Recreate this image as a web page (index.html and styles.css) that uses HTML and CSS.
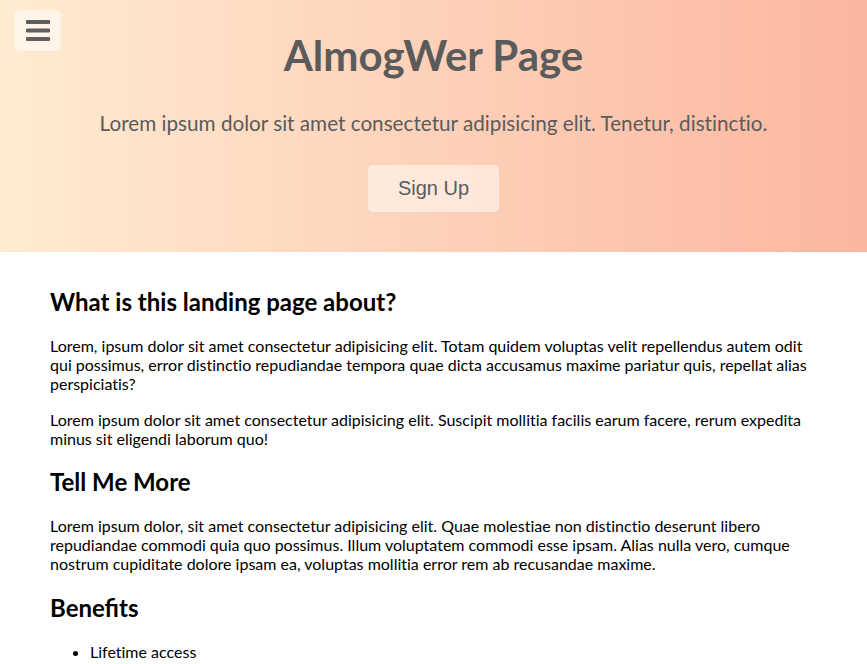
FILE: index.html
```html
<!DOCTYPE html>
<html lang="en">
<head>
<meta charset="utf-8">
<title>AlmogWer Page</title>
<link rel="stylesheet" href="styles.css">
</head>
<body>
<header class="hero">
  <button class="menu-btn" aria-label="Menu">
    <svg width="24" height="21" viewBox="0 0 24 21"><rect x="0" y="0" width="24" height="4" rx="1"/><rect x="0" y="8.5" width="24" height="4" rx="1"/><rect x="0" y="17" width="24" height="4" rx="1"/></svg>
  </button>
  <h1 class="hero-title">AlmogWer Page</h1>
  <p class="hero-sub">Lorem ipsum dolor sit amet consectetur adipisicing elit. Tenetur, distinctio.</p>
  <button class="signup">Sign Up</button>
</header>
<main class="content">
  <h2>What is this landing page about?</h2>
  <p>Lorem, ipsum dolor sit amet consectetur adipisicing elit. Totam quidem voluptas velit repellendus autem odit qui possimus, error distinctio repudiandae tempora quae dicta accusamus maxime pariatur quis, repellat alias perspiciatis?</p>
  <p>Lorem ipsum dolor sit amet consectetur adipisicing elit. Suscipit mollitia facilis earum facere, rerum expedita minus sit eligendi laborum quo!</p>
  <h2>Tell Me More</h2>
  <p>Lorem ipsum dolor, sit amet consectetur adipisicing elit. Quae molestiae non distinctio deserunt libero repudiandae commodi quia quo possimus. Illum voluptatem commodi esse ipsam. Alias nulla vero, cumque nostrum cupiditate dolore ipsam ea, voluptas mollitia error rem ab recusandae maxime.</p>
  <h2>Beneﬁts</h2>
  <ul>
    <li>Lifetime access</li>
  </ul>
</main>
</body>
</html>
```
FILE: styles.css
```css
* { box-sizing: border-box; }
body {
  margin: 0;
  font-family: Lato, "Noto Sans", sans-serif;
  font-variant-ligatures: none;
  color: #000;
}
.hero {
  position: relative;
  height: 252px;
  background: linear-gradient(to right, #ffecd2, #fcb69f);
  display: flex;
  flex-direction: column;
  align-items: center;
  padding-top: 30px;
  color: #5b5b5b;
}
.menu-btn {
  position: absolute;
  left: 14px;
  top: 10px;
  width: 47px;
  height: 41px;
  border: none;
  border-radius: 5px;
  background: rgba(255, 255, 255, 0.5);
  display: flex;
  align-items: center;
  justify-content: center;
  padding: 0;
}
.menu-btn svg { fill: #5e5e5e; }
.hero-title {
  margin: 0;
  font-size: 42px;
  line-height: 50px;
  font-weight: 700;
}
.hero-sub {
  margin: 31px 0 0;
  font-size: 20.7px;
  line-height: 25px;
}
.signup {
  margin-top: 29px;
  width: 131px;
  height: 47px;
  border: none;
  border-radius: 5px;
  background: rgba(255, 255, 255, 0.5);
  font-family: "Liberation Sans", Arial, sans-serif;
  font-size: 20px;
  color: #5b5b5b;
}
.content {
  padding: 16px 50px 0;
}
.content h2 {
  font-size: 24px;
  line-height: 28px;
  margin: 20px 0;
  font-weight: 700;
}
.content p {
  font-size: 16px;
  line-height: 19.2px;
  margin: 16px 0;
}
.content ul {
  margin: 15px 0;
  padding-left: 40px;
  font-size: 16px;
  line-height: 19.2px;
}
```
